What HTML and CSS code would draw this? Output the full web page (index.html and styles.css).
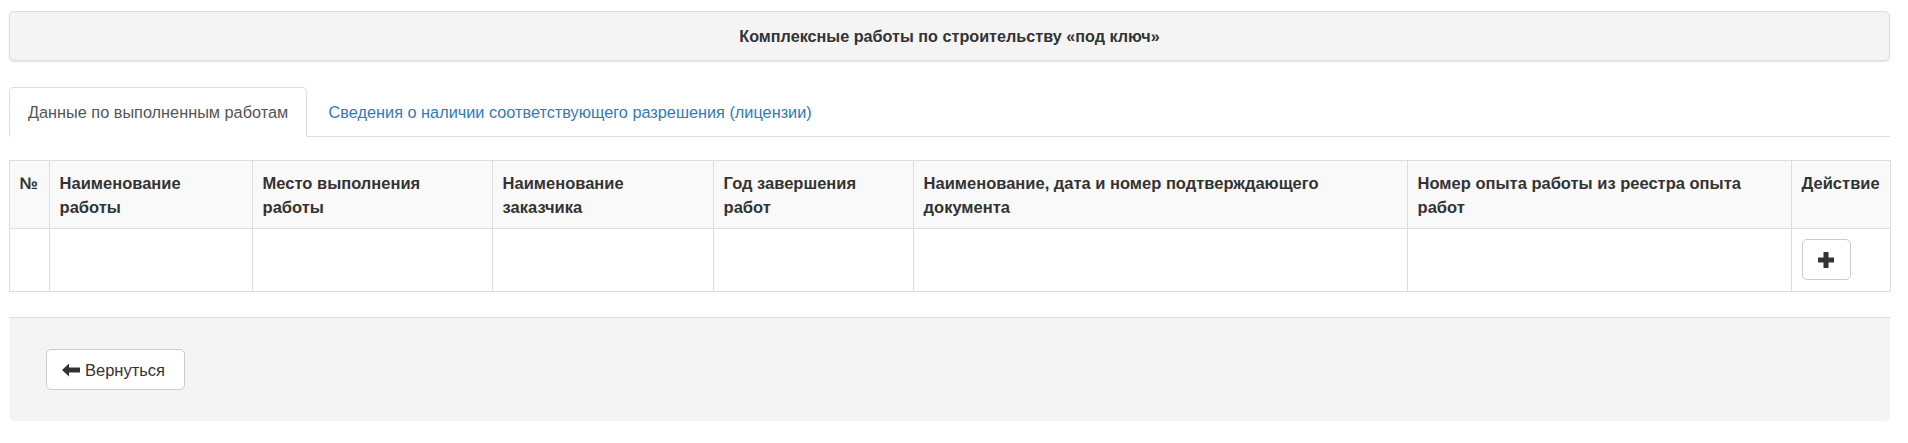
FILE: index.html
```html
<!DOCTYPE html>
<html lang="ru">
<head>
<meta charset="utf-8">
<title>Комплексные работы</title>
<link rel="stylesheet" href="styles.css">
</head>
<body>
<div class="page">
  <div class="panel-head">Комплексные работы по строительству «под ключ»</div>

  <ul class="tabs">
    <li class="tab active"><a>Данные по выполненным работам</a></li>
    <li class="tab"><a class="link">Сведения о наличии соответствующего разрешения (лицензии)</a></li>
  </ul>

  <table class="grid">
    <colgroup>
      <col class="c1"><col class="c2"><col class="c3"><col class="c4"><col class="c5"><col class="c6"><col class="c7"><col class="c8">
    </colgroup>
    <thead>
      <tr>
        <th>№</th>
        <th>Наименование работы</th>
        <th>Место выполнения работы</th>
        <th>Наименование заказчика</th>
        <th>Год завершения работ</th>
        <th>Наименование, дата и номер подтверждающего документа</th>
        <th>Номер опыта работы из реестра опыта работ</th>
        <th>Действие</th>
      </tr>
    </thead>
    <tbody>
      <tr>
        <td></td><td></td><td></td><td></td><td></td><td></td><td></td>
        <td><button class="btn btn-icon" type="button" aria-label="Добавить">
          <svg class="ico-plus" viewBox="0 0 16 16" width="16" height="16"><rect x="5.5" y="0" width="5" height="16" fill="#333"/><rect x="0" y="5.5" width="16" height="5" fill="#333"/></svg>
        </button></td>
      </tr>
    </tbody>
  </table>

  <div class="panel-foot">
    <button class="btn" type="button">
      <svg class="ico-arrow" viewBox="0 0 18 14" width="18" height="14"><path d="M0 7 L7 0.5 L7 4.5 L18 4.5 L18 9.5 L7 9.5 L7 13.5 Z" fill="#333"/></svg>
      <span>Вернуться</span>
    </button>
  </div>
</div>
</body>
</html>
```

FILE: styles.css
```css
* { box-sizing: border-box; }

html, body {
  margin: 0;
  padding: 0;
  background: #fff;
}

body {
  font-family: "Liberation Sans", Arial, Helvetica, sans-serif;
  font-size: 16.3px;
  line-height: 24px;
  color: #333;
}

.page {
  padding: 11px 18px 0 9px;
}

.panel-head {
  background: #f4f4f4;
  border: 1px solid #dddddd;
  border-radius: 5px;
  box-shadow: 0 1px 2px rgba(0, 0, 0, 0.12);
  padding: 12px 18px;
  text-align: center;
  font-weight: bold;
  font-size: 16.2px;
  line-height: 24px;
  color: #333;
  height: 50px;
}

.tabs {
  list-style: none;
  margin: 26px 0 0 0;
  padding: 0;
  display: flex;
  border-bottom: 1px solid #dddddd;
}

.tab {
  margin-bottom: -1px;
  margin-right: 2.4px;
}

.tab a {
  display: block;
  padding: 12px 18px;
  line-height: 24px;
  border: 1px solid transparent;
  border-radius: 5px 5px 0 0;
}

.tab.active a {
  color: #555;
  background: #fff;
  border-color: #dddddd #dddddd transparent #dddddd;
}

.link {
  color: #337ab7;
}

.grid {
  margin-top: 23px;
  width: 100%;
  border-collapse: collapse;
  table-layout: fixed;
  border: 1px solid #dddddd;
}

.c1 { width: 40px; }
.c2 { width: 203px; }
.c3 { width: 240px; }
.c4 { width: 221px; }
.c5 { width: 200px; }
.c6 { width: 494px; }
.c7 { width: 384px; }
.c8 { width: 99px; }

.grid th {
  background: #f9f9f9;
  text-align: left;
  vertical-align: top;
  font-weight: bold;
  font-size: 16.5px;
  padding: 10px 9.6px 9px;
  border: 1px solid #dddddd;
}

.grid td {
  padding: 10px 9.6px 10px;
  border: 1px solid #dddddd;
  vertical-align: top;
  height: 63px;
}

.btn {
  display: inline-flex;
  align-items: center;
  gap: 5px;
  height: 41px;
  padding: 0 14.4px;
  background: #fff;
  border: 1px solid #cccccc;
  border-radius: 5px;
  font-family: "Liberation Sans", Arial, Helvetica, sans-serif;
  font-size: 16.5px;
  line-height: 24px;
  color: #333;
  cursor: pointer;
}

.btn-icon {
  width: 49px;
  justify-content: center;
  padding: 0;
  vertical-align: top;
}

.ico-plus {
  display: block;
  width: 16px;
  height: 16px;
}

.ico-arrow {
  display: block;
  width: 18px;
  height: 14px;
}

.panel-foot {
  margin-top: 25px;
  background: #f4f4f4;
  border-top: 1px solid #dddddd;
  border-radius: 0 0 5px 5px;
  padding: 31px 37px 31px;
  height: 104px;
}

.panel-foot .btn {
  width: 139px;
  padding: 0 15px;
}
```
